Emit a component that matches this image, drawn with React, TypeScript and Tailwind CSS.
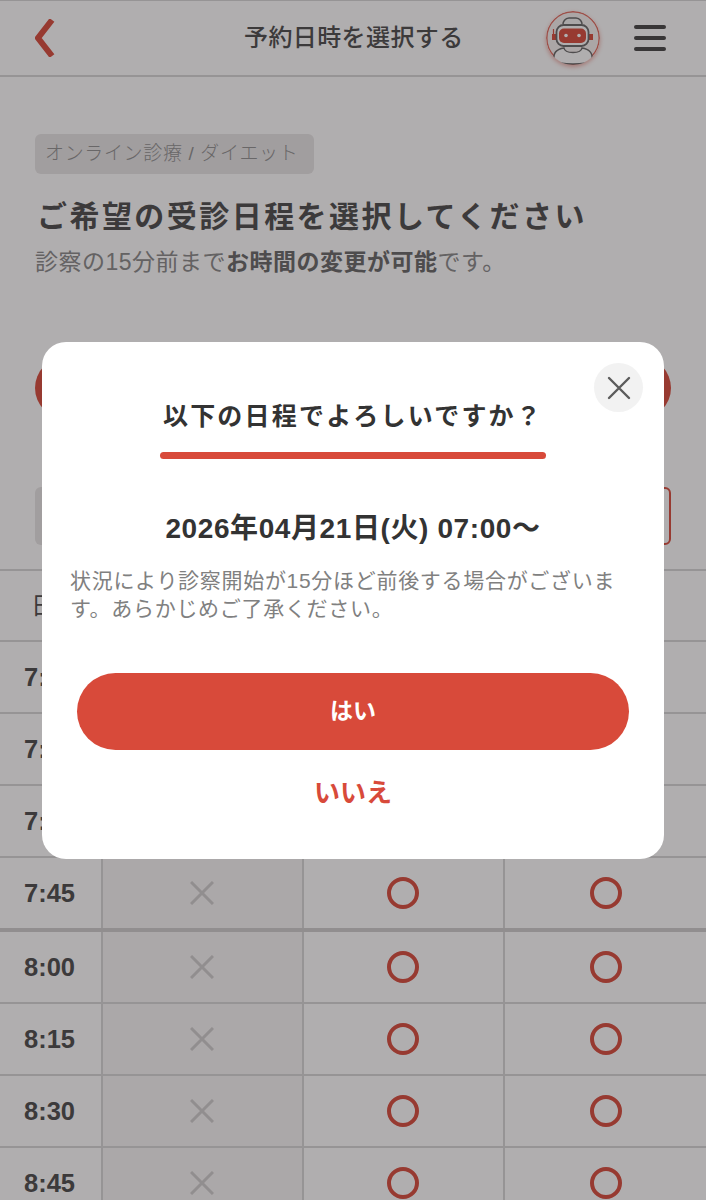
const font = { fontFamily: '"Liberation Sans", "Noto Sans CJK JP", sans-serif' };

const times = ['7:00', '7:15', '7:30', '7:45', '8:00', '8:15', '8:30', '8:45'];

const RobotIcon = () => (
  <svg viewBox="0 0 54 54" className="w-[54px] h-[54px] rounded-full shadow-[0_2px_4px_rgba(216,74,58,0.45)]" fill="none">
    <circle cx="27" cy="27" r="26.2" fill="#f8f2f1" stroke="#e2695d" strokeWidth="1.4" />
    <path d="M17 13c0-2 2-6 6-6h7c4 0 6 4 6 6" stroke="#666" strokeWidth="1.5" fill="#f4f4f4" />
    <path d="M6 23h4v6H6zM43 23h4v6h-4z" fill="#d84a3a" />
    <path d="M7.5 23v-5" stroke="#d84a3a" strokeWidth="1.2" />
    <rect x="10.5" y="14" width="32" height="21" rx="7" fill="#fff" stroke="#666" strokeWidth="1.8" />
    <rect x="13" y="17.5" width="27" height="14.5" rx="5" fill="#d84a3a" />
    <circle cx="20" cy="24.5" r="1.8" fill="#fff" />
    <circle cx="33" cy="24.5" r="1.8" fill="#fff" />
    <path d="M8 49c-1-7 3-11 10-12 1 6 17 6 18 0 7 1 11 5 10 12-4 3-10 4-19 4S12 52 8 49z" stroke="#666" strokeWidth="1.5" fill="#fff" />
  </svg>
);

const CrossMark = () => (
  <svg viewBox="0 0 24 24" className="w-6 h-6" fill="none">
    <path d="M1 1l22 22M23 1L1 23" stroke="#cfcdcd" strokeWidth="3" />
  </svg>
);

const CircleMark = () => <div className="w-8 h-8 rounded-full border-4 border-[#d84a3a]" />;

const App = () => {
  return (
    <div className="relative w-[706px] h-[1200px] overflow-hidden bg-white text-[#4a4a4a]" style={font}>
      <header className="flex items-center h-[77px] border-t border-b-2 border-[#d6d6d6] pl-[35px] pr-[40px]">
        <svg viewBox="0 0 20 38" className="w-5 h-[38px]" fill="none">
          <path d="M17 1L3 19l14 18" stroke="#d84a3a" strokeWidth="6" />
        </svg>
        <h1 className="ml-[189px] w-[218px] text-center text-[24px] tracking-[0.4px] font-medium whitespace-nowrap">予約日時を選択する</h1>
        <div className="ml-[84px]">
          <RobotIcon />
        </div>
        <div className="ml-[34px] flex flex-col gap-[7px]">
          <span className="block w-8 h-1 rounded-full bg-[#444]" />
          <span className="block w-8 h-1 rounded-full bg-[#444]" />
          <span className="block w-8 h-1 rounded-full bg-[#444]" />
        </div>
      </header>

      <section className="px-[35px] pt-[57px]">
        <span className="inline-flex items-center h-10 w-[279px] pl-[10px] rounded-md bg-[#e8e6e6] text-[19px] tracking-[0.65px] text-[#909090] font-light whitespace-nowrap">
          オンライン診療 / ダイエット
        </span>
        <h2 className="mt-[21px] pl-[2px] text-[30px] leading-[44px] font-bold tracking-[2.45px] whitespace-nowrap">ご希望の受診日程を選択してください</h2>
        <p className="mt-[6px] text-[23px] leading-[34px] text-[#888] tracking-[0.5px] whitespace-nowrap">
          診察の15分前まで<b className="text-[#666]">お時間の変更が可能</b>です。
        </p>
        <div className="mt-[78px] h-[62px] rounded-full bg-[#d84a3a]" />
        <div className="mt-[68px] grid grid-cols-2 gap-4 h-[58px]">
          <div className="rounded-md bg-[#e8e6e6]" />
          <div className="rounded-md border-2 border-[#d84a3a]" />
        </div>
      </section>

      <div className="mt-[24px] border-t-2 border-[#d6d6d6]">
        <div className="grid grid-cols-[103px_201px_201px_201px] h-[71px] border-b-2 border-[#d6d6d6]">
          <div className="pl-[31px] flex items-center text-[24px]">日</div>
        </div>
        {times.map((time) => (
          <div
            key={time}
            className={`grid grid-cols-[103px_201px_201px_201px] ${time === '7:45' ? 'h-[74px] border-b-4 border-[#cfcdcd]' : 'h-[72px] border-b-2 border-[#d6d6d6]'}`}
          >
            <div className="flex items-center justify-center pr-[2px] border-r-2 border-[#d6d6d6] text-[25.5px] font-bold">{time}</div>
            <div className="flex items-center justify-center pr-[1px] border-r-2 border-[#d6d6d6] bg-[#f8f6f6]">
              <CrossMark />
            </div>
            <div className="flex items-center justify-center pr-[1px] border-r-2 border-[#d6d6d6]">
              <CircleMark />
            </div>
            <div className="flex items-center justify-center">
              <CircleMark />
            </div>
          </div>
        ))}
      </div>

      {/* dimmed overlay + confirm modal */}
      <div className="absolute inset-0 bg-[#231f20]/[0.36] flex justify-center items-start pt-[342px]">
        <div className="relative w-[622px] h-[517px] rounded-[24px] bg-white text-[#333] flex flex-col items-center">
          <button className="absolute top-[21px] right-[21px] w-[49px] h-[49px] rounded-full bg-[#f2f2f2] flex items-center justify-center">
            <svg viewBox="0 0 24 24" className="w-6 h-6" fill="none">
              <path d="M2 2l20 20M22 2L2 22" stroke="#5c5c5c" strokeWidth="2.4" strokeLinecap="round" />
            </svg>
          </button>
          <h3 className="mt-[56px] text-[25px] leading-9 font-bold tracking-[2.2px] whitespace-nowrap">以下の日程でよろしいですか？</h3>
          <div className="mt-[18px] w-[386px] h-[7px] rounded-full bg-[#d84a3a]" />
          <p className="mt-[52px] text-[28px] leading-9 font-bold tracking-[0.6px] whitespace-nowrap">2026年04月21日(火) 07:00〜</p>
          <p className="mt-[20px] w-[564px] self-start ml-[28px] text-[21px] leading-7 tracking-[0.7px] text-[#808080]">
            状況により診察開始が15分ほど前後する場合がございます。あらかじめご了承ください。
          </p>
          <button className="mt-[50px] w-[552px] h-[77px] rounded-full bg-[#d84a3a] text-white text-[23px] font-bold">はい</button>
          <button className="mt-[25px] text-[26px] leading-9 font-bold text-[#d84a3a]">いいえ</button>
        </div>
      </div>
    </div>
  );
};

export default App;
